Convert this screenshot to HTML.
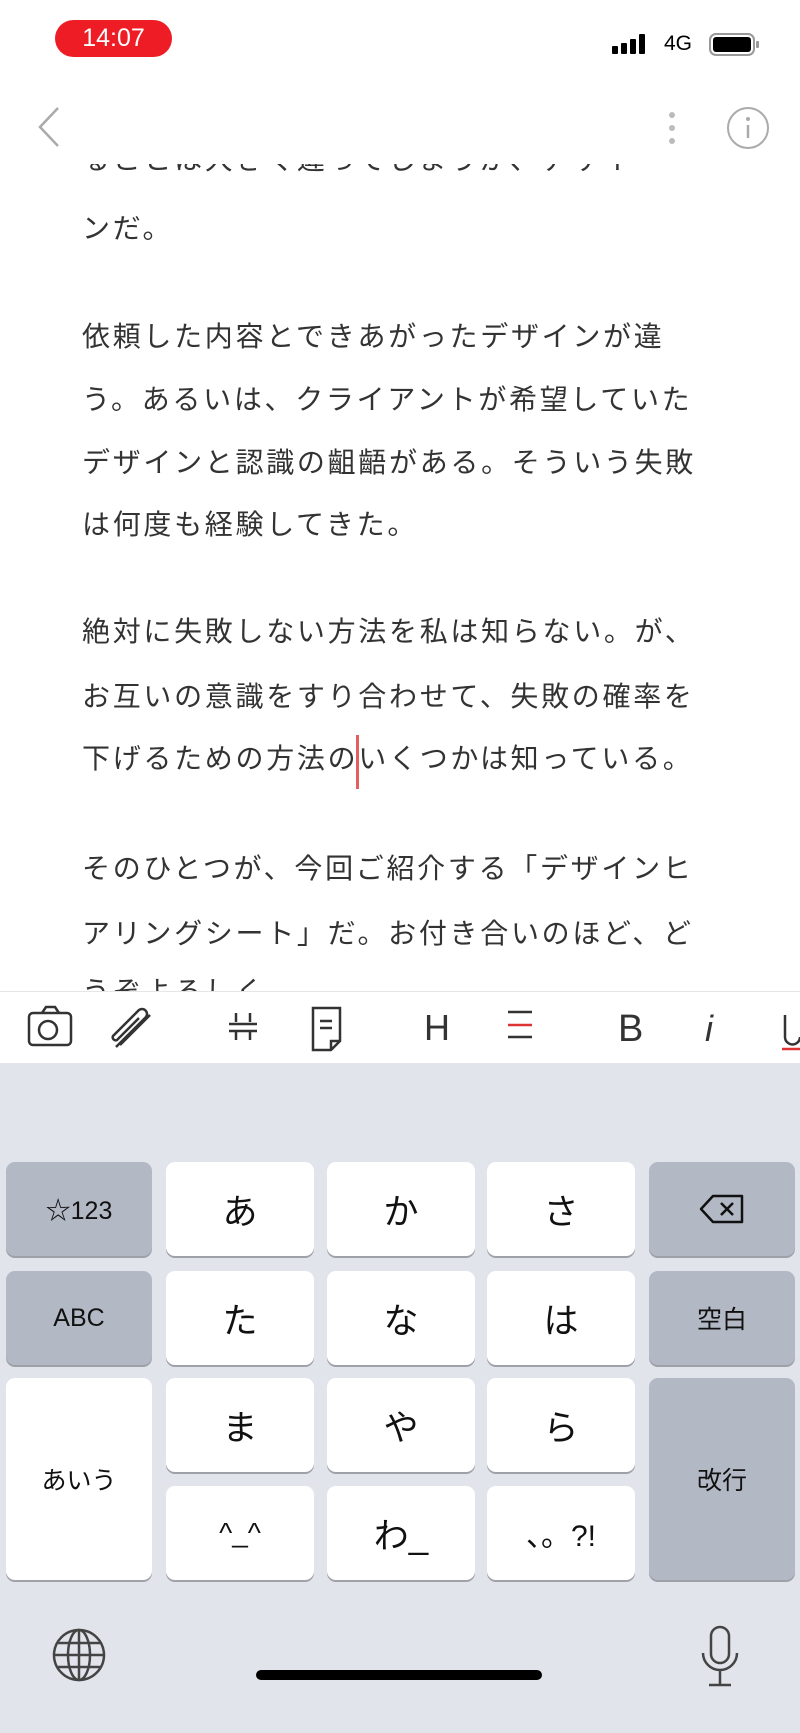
<!DOCTYPE html>
<html><head><meta charset="utf-8"><style>
*{margin:0;padding:0;box-sizing:border-box}
body{width:800px;height:1733px;position:relative;overflow:hidden;background:#fff;font-family:"Liberation Sans","Noto Sans CJK JP",sans-serif}
.ln{position:absolute;left:82px;font-size:28px;letter-spacing:2.7px;color:#333;white-space:nowrap;line-height:40px;height:40px}
.kb{position:absolute;left:0;top:1063px;width:800px;height:670px;background:#e1e4eb}
.k{position:absolute;background:#fff;border-radius:9px;box-shadow:0 2px 0 #9ea1a8;display:flex;align-items:center;justify-content:center;font-size:35px;color:#111}
.g{background:#b3b8c5;font-size:26px}
.s{font-size:25px}
</style></head><body>
<div class="ln" style="top:140px;">ることは大きく違ってしまうが、デザイ</div>
<div style="position:absolute;left:0;top:0;width:800px;height:164px;background:#fff"></div>
<div style="position:absolute;left:55px;top:20px;width:117px;height:37px;background:#ee1d25;border-radius:19px;color:#fff;font-size:25px;text-align:center;line-height:37px">14:07</div>
<svg style="position:absolute;left:612px;top:34px" width="40" height="20"><rect x="0" y="12" width="6" height="8" rx="1" fill="#000"/><rect x="9" y="9" width="6" height="11" rx="1" fill="#000"/><rect x="18" y="5" width="6" height="15" rx="1" fill="#000"/><rect x="27" y="0" width="6" height="20" rx="1" fill="#000"/></svg>
<div style="position:absolute;left:664px;top:32px;font-size:21px;color:#000">4G</div>
<svg style="position:absolute;left:709px;top:33px" width="52" height="24"><rect x="1" y="1" width="44" height="21" rx="6" fill="none" stroke="#999" stroke-width="2"/><rect x="4" y="4" width="38" height="15" rx="3" fill="#000"/><rect x="47" y="8" width="3" height="7" rx="1" fill="#999"/></svg>
<svg style="position:absolute;left:36px;top:106px" width="26" height="42"><path d="M22 2 L4 21 L22 40" fill="none" stroke="#aaa" stroke-width="2.5"/></svg>
<svg style="position:absolute;left:666px;top:110px" width="12" height="36"><circle cx="6" cy="5" r="3" fill="#bbb"/><circle cx="6" cy="18" r="3" fill="#bbb"/><circle cx="6" cy="31" r="3" fill="#bbb"/></svg>
<svg style="position:absolute;left:726px;top:106px" width="44" height="44"><circle cx="22" cy="22" r="20" fill="none" stroke="#aaa" stroke-width="2"/><circle cx="22" cy="13" r="2" fill="#aaa"/><path d="M22 19 V32" stroke="#aaa" stroke-width="2.5"/></svg>
<div class="ln" style="top:209px">ンだ。</div>
<div class="ln" style="top:317px">依頼した内容とできあがったデザインが違</div>
<div class="ln" style="top:380px">う。あるいは、クライアントが希望していた</div>
<div class="ln" style="top:443px">デザインと認識の齟齬がある。そういう失敗</div>
<div class="ln" style="top:505px">は何度も経験してきた。</div>
<div class="ln" style="top:612px">絶対に失敗しない方法を私は知らない。が、</div>
<div class="ln" style="top:677px">お互いの意識をすり合わせて、失敗の確率を</div>
<div class="ln" style="top:739px">下げるための方法のいくつかは知っている。</div>
<div style="position:absolute;left:356px;top:735px;width:3px;height:54px;background:#e06060"></div>
<div class="ln" style="top:849px">そのひとつが、今回ご紹介する「デザインヒ</div>
<div class="ln" style="top:914px">アリングシート」だ。お付き合いのほど、ど</div>
<div class="ln" style="top:972px">うぞよろしく</div>
<div style="position:absolute;left:0;top:991px;width:800px;height:72px;background:#fff;border-top:1px solid #e6e6e6"></div>
<svg style="position:absolute;left:0;top:991px" width="800" height="72">
<g fill="none" stroke="#333" stroke-width="2.5">
<rect x="29" y="22" width="42" height="32" rx="4"/><path d="M42 22 l4-6 h9 l4 6"/><circle cx="48" cy="39" r="9"/>
<path d="M116 56 l30-30 a5 5 0 0 0 -7 -7 l-26 26 a3 3 0 0 0 4 4 l22-22 m-19 27 l30-30"/>
<path d="M236 22 v9 m0 9 v9 M250 22 v9 m0 9 v9 M229 33 h28 M229 40 h28"/>
<path d="M313 17 h27 v33 l-9 9 h-18 z M340 50 h-9 v9 M320 30 h12 M320 37 h12"/>
</g>
<text x="424" y="49" font-size="36" fill="#333" font-family="Liberation Sans">H</text>
<path d="M508 21 h24 M508 46 h24" stroke="#333" stroke-width="2.5"/><path d="M508 34 h24" stroke="#d33" stroke-width="2.5"/>
<text x="618" y="50" font-size="38" fill="#333" font-family="Liberation Sans">B</text>
<text x="705" y="50" font-size="36" fill="#333" font-style="italic" font-family="Liberation Sans">i</text>
<path d="M785 24 v22 a6 6 0 0 0 15 0" fill="none" stroke="#333" stroke-width="2.5"/><path d="M782 58 h18" stroke="#d33" stroke-width="2.5"/>
</svg>
<div class="kb"></div>
<div class="k g s" style="left:6px;top:1162px;width:146px;height:94px">☆123</div>
<div class="k" style="left:166px;top:1162px;width:148px;height:94px">あ</div>
<div class="k" style="left:327px;top:1162px;width:148px;height:94px">か</div>
<div class="k" style="left:487px;top:1162px;width:148px;height:94px">さ</div>
<div class="k g" style="left:649px;top:1162px;width:146px;height:94px"><svg width="46" height="30"><path d="M14 2 h29 v26 h-29 l-12 -13 z" fill="none" stroke="#111" stroke-width="2.5" stroke-linejoin="round"/><path d="M22 9 l12 12 M34 9 l-12 12" stroke="#111" stroke-width="2.5"/></svg></div>
<div class="k g s" style="left:6px;top:1271px;width:146px;height:94px">ABC</div>
<div class="k" style="left:166px;top:1271px;width:148px;height:94px">た</div>
<div class="k" style="left:327px;top:1271px;width:148px;height:94px">な</div>
<div class="k" style="left:487px;top:1271px;width:148px;height:94px">は</div>
<div class="k g s" style="left:649px;top:1271px;width:146px;height:94px">空白</div>
<div class="k s" style="left:6px;top:1378px;width:146px;height:202px">あいう</div>
<div class="k" style="left:166px;top:1378px;width:148px;height:94px">ま</div>
<div class="k" style="left:327px;top:1378px;width:148px;height:94px">や</div>
<div class="k" style="left:487px;top:1378px;width:148px;height:94px">ら</div>
<div class="k g s" style="left:649px;top:1378px;width:146px;height:202px">改行</div>
<div class="k" style="left:166px;top:1486px;width:148px;height:94px;font-size:28px">^_^</div>
<div class="k" style="left:327px;top:1486px;width:148px;height:94px">わ_</div>
<div class="k" style="left:487px;top:1486px;width:148px;height:94px;font-size:30px">、。?!</div>
<svg style="position:absolute;left:52px;top:1628px" width="54" height="54"><g fill="none" stroke="#444" stroke-width="2.5"><circle cx="27" cy="27" r="25"/><ellipse cx="27" cy="27" rx="11" ry="25"/><path d="M27 2 v50 M2 27 h50 M6 15 h42 M6 39 h42"/></g></svg>
<svg style="position:absolute;left:700px;top:1625px" width="40" height="66"><g fill="none" stroke="#444" stroke-width="2.5"><rect x="11" y="2" width="18" height="36" rx="9"/><path d="M3 28 a17 17 0 0 0 34 0 M20 45 v14 M9 60 h22"/></g></svg>
<div style="position:absolute;left:256px;top:1670px;width:286px;height:10px;border-radius:5px;background:#000"></div>
</body></html>
